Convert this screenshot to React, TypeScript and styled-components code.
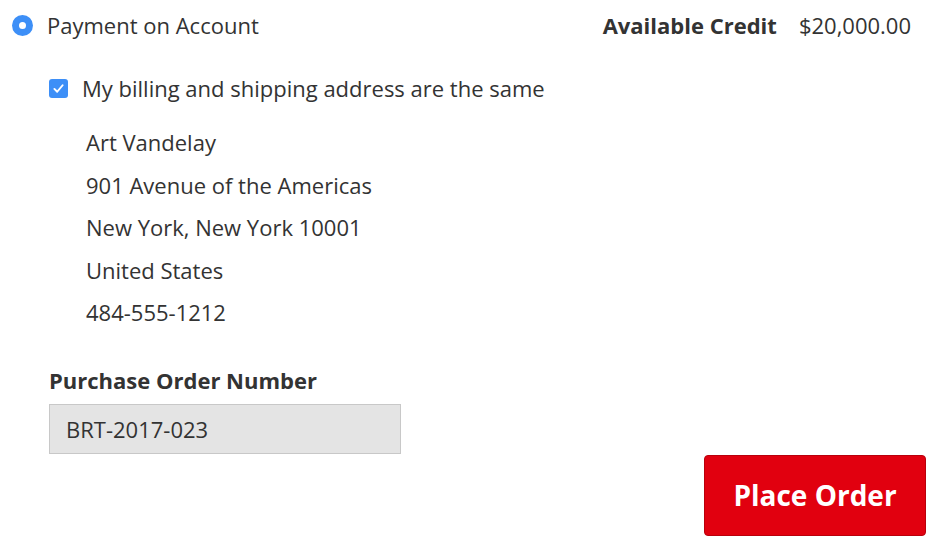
import styled, { createGlobalStyle } from "styled-components"

const GlobalStyle = createGlobalStyle`
  html, body {
    margin: 0;
    padding: 0;
    background: #ffffff;
  }
  body {
    font-family: "Open Sans", "Liberation Sans", sans-serif;
    color: #333333;
  }
`

const Page = styled.div`
  width: 939px;
  height: 547px;
  box-sizing: border-box;
  padding: 0 13px 0 12px;
  overflow: hidden;
`

const MethodRow = styled.div`
  display: flex;
  align-items: center;
  justify-content: space-between;
  height: 50px;
`

const MethodLabel = styled.label`
  display: flex;
  align-items: center;
  gap: 14px;
  font-size: 22px;
  color: #333333;
`

const Radio = styled.span`
  width: 21px;
  height: 21px;
  border-radius: 50%;
  background: #3d8ff7;
  display: flex;
  align-items: center;
  justify-content: center;

  &::after {
    content: "";
    width: 7px;
    height: 7px;
    border-radius: 50%;
    background: #ffffff;
  }
`

const Credit = styled.div`
  display: flex;
  align-items: center;
  gap: 22px;
  font-size: 22px;
  padding-right: 15px;
`

const CreditLabel = styled.span`
  font-weight: 700;
`

const Body = styled.div`
  padding-left: 37px;
`

const CheckRow = styled.label`
  display: flex;
  align-items: center;
  gap: 14px;
  height: 76px;
  font-size: 22px;
`

const Check = styled.span`
  width: 19px;
  height: 19px;
  border-radius: 3px;
  background: #3d8ff7;
  display: flex;
  align-items: center;
  justify-content: center;
`

const Address = styled.address`
  font-style: normal;
  padding-left: 37px;
  font-size: 22px;
  line-height: 42.5px;
  margin-top: -5px;
`

const Field = styled.div`
  display: flex;
  flex-direction: column;
  margin-top: 30px;
`

const FieldLabel = styled.label`
  font-weight: 700;
  font-size: 22px;
  line-height: 32px;
  margin-bottom: 8px;
`

const Input = styled.input`
  width: 352px;
  height: 50px;
  box-sizing: border-box;
  border: 1px solid #c8c8c8;
  background: #e4e4e4;
  padding: 0 16px;
  font-family: "Open Sans", "Liberation Sans", sans-serif;
  font-size: 22px;
  color: #333333;
  outline: none;
`

const Actions = styled.div`
  display: flex;
  justify-content: flex-end;
  margin-top: 1px;
`

const PlaceOrder = styled.button`
  width: 222px;
  height: 81px;
  border: 1px solid #b9000c;
  border-radius: 4px;
  background: #e1000f;
  color: #ffffff;
  font-family: "Open Sans", "Liberation Sans", sans-serif;
  font-weight: 700;
  font-size: 28px;
  cursor: pointer;
`

export default function App() {
  return (
    <>
      <GlobalStyle />
      <Page>
        <MethodRow>
          <MethodLabel>
            <Radio />
            Payment on Account
          </MethodLabel>
          <Credit>
            <CreditLabel>Available Credit</CreditLabel>
            <span>$20,000.00</span>
          </Credit>
        </MethodRow>
        <Body>
          <CheckRow>
            <Check>
              <svg width="13" height="13" viewBox="0 0 12 12">
                <path
                  d="M2.2 6.4 L4.8 9 L9.8 3"
                  fill="none"
                  stroke="#ffffff"
                  strokeWidth="1.8"
                  strokeLinecap="round"
                  strokeLinejoin="round"
                />
              </svg>
            </Check>
            My billing and shipping address are the same
          </CheckRow>
          <Address>
            <div>Art Vandelay</div>
            <div>901 Avenue of the Americas</div>
            <div>New York, New York 10001</div>
            <div>United States</div>
            <div>484-555-1212</div>
          </Address>
          <Field>
            <FieldLabel>Purchase Order Number</FieldLabel>
            <Input defaultValue="BRT-2017-023" />
          </Field>
        </Body>
        <Actions>
          <PlaceOrder>Place Order</PlaceOrder>
        </Actions>
      </Page>
    </>
  )
}
